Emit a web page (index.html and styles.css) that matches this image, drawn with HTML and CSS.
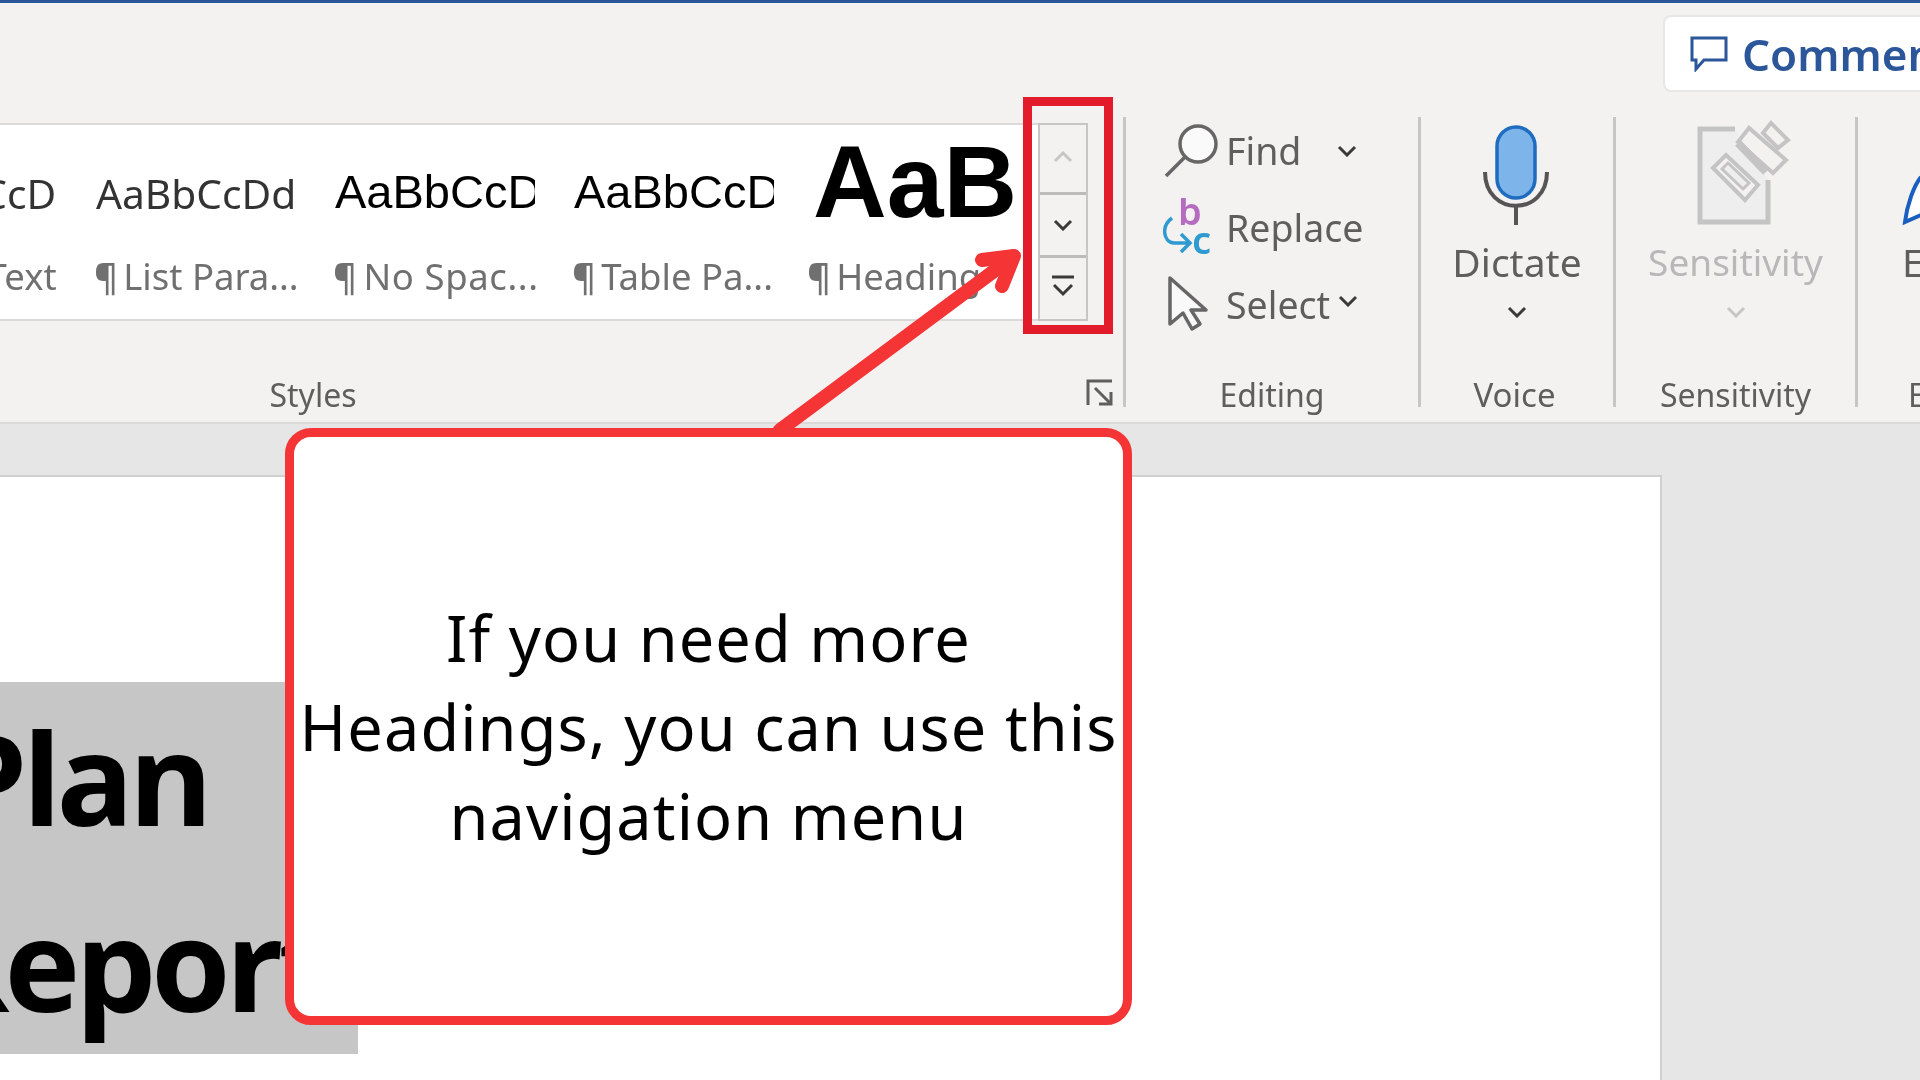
FILE: index.html
```html
<!DOCTYPE html>
<html lang="en">
<head>
  <meta charset="UTF-8" />
  <title>Styles gallery</title>
  <link rel="stylesheet" href="styles.css">
</head>
<body>
  <header class="ribbon">
    <div class="ribbon-top">
      <button class="comments">
        <svg class="comments-icon" viewBox="0 0 38 36"><path d="M2 2H36V24H14L6 33V24H2Z"/></svg>
        <span>Comments</span>
      </button>
    </div>
    <div class="groups">
      <section class="group group-styles">
        <div class="group-main gallery-wrap">
          <div class="gallery">
            <div class="style-item style-item-first">
              <div class="sample sample-light">AaBbCcD</div>
              <div class="style-name"><span class="pilcrow">¶</span> Body Text</div>
            </div>
            <div class="style-item">
              <div class="sample sample-light">AaBbCcDd</div>
              <div class="style-name"><span class="pilcrow">¶</span> List Para...</div>
            </div>
            <div class="style-item">
              <div class="sample">AaBbCcD</div>
              <div class="style-name style-name-wide"><span class="pilcrow">¶</span> No Spac...</div>
            </div>
            <div class="style-item">
              <div class="sample">AaBbCcD</div>
              <div class="style-name"><span class="pilcrow">¶</span> Table Pa...</div>
            </div>
            <div class="style-item">
              <div class="sample sample-big">AaB</div>
              <div class="style-name style-name-last"><span class="pilcrow">¶</span> Heading 1</div>
            </div>
          </div>
          <div class="scroller">
            <div class="scroll-btn scroll-up"><svg viewBox="0 0 20 12"><path d="M2 10L10 2L18 10"/></svg></div>
            <div class="scroll-btn scroll-down"><svg viewBox="0 0 20 12"><path d="M2 2L10 10L18 2"/></svg></div>
            <div class="scroll-btn scroll-more"><svg viewBox="0 0 24 22"><path d="M1 2H23"/><path d="M3 10L12 19L21 10"/></svg></div>
          </div>
        </div>
        <div class="group-label">Styles
          <svg class="launcher" viewBox="0 0 28 28"><path d="M26 2H2V26"/><path d="M9 9L25 25"/><path d="M25 13V25H13"/></svg>
        </div>
      </section>

      <section class="group group-editing">
        <div class="group-main edit-list">
          <div class="edit-row">
            <svg class="edit-icon" viewBox="0 0 56 56"><circle cx="35" cy="21" r="18"/><path d="M22 34L3 53"/></svg>
            <span>Find</span>
            <svg class="chev chev-find" viewBox="0 0 20 12"><path d="M2 2L10 10L18 2"/></svg>
          </div>
          <div class="edit-row">
            <svg class="edit-icon" viewBox="0 0 56 60">
              <text class="rep-b" x="15" y="27">b</text>
              <text class="rep-c" x="29" y="56">c</text>
              <path class="rep-arrow" d="M9 20C-2 28 0 44 11 45H27"/>
              <path class="rep-arrow" d="M18 36L27 45L18 54"/>
            </svg>
            <span>Replace</span>
          </div>
          <div class="edit-row">
            <svg class="edit-icon" viewBox="0 0 56 60"><path class="cursor" d="M7 3V49L20 38L29 54L37 49L28 35H43Z"/></svg>
            <span>Select</span>
            <svg class="chev chev-select" viewBox="0 0 20 12"><path d="M2 2L10 10L18 2"/></svg>
          </div>
        </div>
        <div class="group-label">Editing</div>
      </section>

      <section class="group group-voice">
        <div class="group-main big-btn">
          <svg class="big-icon" viewBox="0 0 70 100">
            <path class="mic-cradle" d="M3 47C3 92 65 92 65 47"/>
            <path class="mic-cradle" d="M34 80V100"/>
            <rect class="mic-body" x="15" y="2" width="38" height="71" rx="19"/>
          </svg>
          <div class="big-text">Dictate</div>
          <svg class="chev" viewBox="0 0 20 12"><path d="M2 2L10 10L18 2"/></svg>
        </div>
        <div class="group-label group-label-voice">Voice</div>
      </section>

      <section class="group group-sensitivity">
        <div class="group-main big-btn is-disabled">
          <svg class="big-icon" viewBox="0 0 90 100">
            <path class="sens-page" d="M44 4H9V97H77V55"/>
            <path class="sens-line" d="M22 43L35 30L67 60L54 75Z"/>
            <path class="sens-slot" d="M31 44L37 38L58 58L52 64Z"/>
            <path class="sens-line" d="M72 8L80 -2L97 15L87 23Z"/>
            <path class="sens-line" d="M58 3L47 17L82 48L95 35Z"/>
            <path class="sens-band" d="M47 18L75 47"/>
          </svg>
          <div class="big-text">Sensitivity</div>
          <svg class="chev" viewBox="0 0 20 12"><path d="M2 2L10 10L18 2"/></svg>
        </div>
        <div class="group-label">Sensitivity</div>
      </section>

      <section class="group group-last">
        <div class="group-main big-btn big-btn-left">
          <svg class="big-icon" viewBox="0 0 30 100"><path class="pen" d="M19 52C12 60 5 80 3 97L19 90"/></svg>
          <div class="big-text">Editor</div>
        </div>
        <div class="group-label group-label-left">Editor</div>
      </section>
    </div>
  </header>

  <main class="workspace">
    <div class="page">
      <div class="doc-title">
        <div class="doc-line doc-line-1">Plan</div>
        <div class="doc-line doc-line-2">Report</div>
      </div>
    </div>
  </main>

  <!-- annotation on top of the screenshot -->
  <div class="mark-box"></div>
  <svg class="mark-arrow" viewBox="0 0 270 200">
    <path d="M10 194L243 21"/>
    <path d="M212 24L244 20L232 50"/>
  </svg>
  <div class="callout">
    <p>If you need more<br>Headings, you can use this<br>navigation menu</p>
  </div>
</body>
</html>
```

FILE: styles.css
```css
* {
  box-sizing: border-box;
}
html, body {
  margin: 0;
  height: 1080px;
  overflow: hidden;
}
body {
  display: flex;
  flex-direction: column;
  width: 1920px;
  position: relative;
  font-family: "Noto Sans", sans-serif;
  background: #e6e6e6;
}

/* ribbon */
.ribbon {
  height: 424px;
  flex: none;
  background: #f3f2f1;
  border-top: 3px solid #2b579a;
  border-bottom: 2px solid #dcdad8;
  filter: blur(0.5px);
}
.ribbon-top {
  height: 114px;
  padding: 12px 0 0 1663px;
}
.comments {
  display: flex;
  align-items: center;
  width: 320px;
  height: 77px;
  padding: 0 0 0 25px;
  background: #fff;
  border: 2px solid #e9e7e5;
  border-radius: 8px;
  font: 600 44px "Noto Sans", sans-serif;
  color: #2b579a;
}
.comments-icon {
  width: 38px;
  height: 36px;
  margin-right: 14px;
  fill: none;
  stroke: #2b579a;
  stroke-width: 3;
}
.groups {
  display: flex;
  height: 290px;
}
.group {
  display: flex;
  flex-direction: column;
  flex: none;
  border-right: 3px solid #c8c6c4;
  position: relative;
}
.group-main {
  height: 258px;
}
.group-label {
  height: 40px;
  line-height: 40px;
  margin-bottom: -8px;
  text-align: center;
  font-size: 32px;
  color: #605e5c;
}
.group-label-voice {
  padding-right: 5px;
  font-size: 33px;
}
.group-styles {
  width: 1623px;
  margin-left: -497px;
}
.group-editing {
  width: 295px;
}
.group-voice {
  width: 195px;
}
.group-sensitivity {
  width: 242px;
}
.group-last {
  border-right: 0;
  width: 200px;
}

/* styles gallery */
.gallery-wrap {
  display: flex;
  align-items: flex-start;
  padding-top: 6px;
}
.gallery {
  display: flex;
  width: 1535px;
  height: 198px;
  padding-left: 354px;
  background: #fff;
  border-top: 2px solid #dcdad8;
  border-bottom: 2px solid #dcdad8;
}
.style-item {
  width: 239px;
  flex: none;
}
.sample {
  width: 200px;
  height: 112px;
  padding-top: 37px;
  overflow: hidden;
  white-space: nowrap;
  font: 47px/60px "Liberation Sans", sans-serif;
  color: #000;
}
.sample-light {
  padding-top: 38px;
  font: 40.7px/60px "Noto Sans", sans-serif;
  color: #333;
}
.style-item-first .sample {
  margin-left: 24px;
}
.sample-big {
  padding-top: 2px;
  font: bold 102px/110px "Liberation Sans", sans-serif;
  overflow: visible;
}
.style-name {
  margin: 14px 0 0 -2px;
  white-space: nowrap;
  font-size: 36.5px;
  line-height: 50px;
  color: #707070;
}
.style-item-first .style-name {
  margin-left: 4px;
}
.style-name-wide {
  letter-spacing: 0.6px;
}
.style-name-last {
  margin-left: -6px;
}
.pilcrow {
  margin-right: -4px;
  font-weight: 600;
}
.scroller {
  display: flex;
  flex-direction: column;
  width: 50px;
  height: 198px;
  border: 2px solid #c8c6c4;
  background: #f3f2f1;
}
.scroll-btn {
  display: flex;
  align-items: center;
  justify-content: center;
  border-top: 3px solid #bdbbb9;
}
.scroll-btn svg {
  width: 20px;
  height: 12px;
  fill: none;
  stroke: #3b3a39;
  stroke-width: 3;
}
.scroll-up {
  height: 67px;
  border-top: 0;
}
.scroll-up svg {
  margin-bottom: 4px;
  stroke: #c8c6c4;
}
.scroll-down {
  height: 63px;
}
.scroll-more {
  height: 64px;
  padding-bottom: 6px;
}
.scroll-more svg {
  width: 24px;
  height: 22px;
}
.launcher {
  position: absolute;
  right: 9px;
  bottom: 0;
  width: 28px;
  height: 28px;
  fill: none;
  stroke: #605e5c;
  stroke-width: 3;
}

/* editing */
.edit-list {
  height: 263px;
  margin-top: -5px;
  padding-left: 37px;
}
.edit-row {
  display: flex;
  align-items: center;
  height: 77px;
  font-size: 37.5px;
  color: #605e5c;
}
.edit-icon {
  width: 56px;
  height: 60px;
  flex: none;
  margin-right: 7px;
  fill: none;
  stroke: #666;
  stroke-width: 3.5;
}
.edit-icon circle {
  fill: #fafafa;
}
.rep-b {
  font: 600 38px "Noto Sans", sans-serif;
  fill: #b56cc0;
  stroke: none;
}
.rep-c {
  font: 600 38px "Noto Sans", sans-serif;
  fill: #2e9ad0;
  stroke: none;
}
.rep-arrow {
  stroke: #2e9ad0;
}
.cursor {
  fill: #f9f9f9;
  stroke-linejoin: round;
}
.chev {
  width: 20px;
  height: 12px;
  fill: none;
  stroke: #3b3a39;
  stroke-width: 3;
}
.chev-find {
  margin-left: 36px;
}
.chev-select {
  margin: -8px 0 0 8px;
}

/* big buttons */
.big-btn {
  display: flex;
  flex-direction: column;
  align-items: center;
  padding-top: 8px;
}
.big-icon {
  height: 100px;
  width: 90px;
  flex: none;
  overflow: visible;
}
.big-text {
  margin: 12px 0 19px;
  font-size: 39px;
  line-height: 50px;
  color: #605e5c;
}
.mic-body {
  fill: #7db5ea;
  stroke: #1f6cbf;
  stroke-width: 3.5;
}
.mic-cradle {
  fill: none;
  stroke: #555;
  stroke-width: 4;
}
.is-disabled .big-text {
  color: #b8b8b8;
  font-size: 37px;
}
.is-disabled .chev {
  stroke: #c8c6c4;
}
.sens-page {
  fill: #eeeeee;
  stroke: #c4c4c4;
  stroke-width: 5;
}
.sens-line {
  fill: #f3f2f1;
  stroke: #c4c4c4;
  stroke-width: 4;
}
.sens-slot {
  fill: #eeeeee;
  stroke: #c4c4c4;
  stroke-width: 3;
}
.sens-band {
  fill: none;
  stroke: #c4c4c4;
  stroke-width: 8;
}
.big-btn-left {
  align-items: flex-start;
  padding-left: 44px;
}
.big-btn-left .big-icon {
  width: 30px;
}
.pen {
  fill: #fff;
  stroke: #1a5fc0;
  stroke-width: 4;
}
.group-label-left {
  padding-left: 50px;
  text-align: left;
}

/* document */
.workspace {
  flex: 1;
  padding-top: 51px;
  filter: blur(0.6px);
}
.page {
  width: 1662px;
  height: 620px;
  background: #fff;
  border-top: 2px solid #d0d0d0;
  border-right: 2px solid #d0d0d0;
  padding-top: 205px;
}
.doc-title {
  width: 358px;
  height: 372px;
  background: #c6c6c6;
  font: bold 128px/186px "Open Sans", sans-serif;
  letter-spacing: -5px;
  color: #000;
  white-space: nowrap;
}
.doc-line {
  position: relative;
  top: 2px;
}
.doc-line-1 {
  margin-left: -53px;
}
.doc-line-2 {
  margin-left: -75px;
}

/* annotation */
.mark-box {
  position: absolute;
  left: 1023px;
  top: 97px;
  width: 90px;
  height: 237px;
  border: 9px solid #e21c2a;
}
.mark-arrow {
  position: absolute;
  left: 770px;
  top: 236px;
  width: 270px;
  height: 200px;
  fill: none;
  stroke: #f53535;
  stroke-width: 14;
  stroke-linecap: round;
  stroke-linejoin: round;
}
.callout {
  position: absolute;
  left: 285px;
  top: 428px;
  width: 847px;
  height: 597px;
  display: flex;
  align-items: center;
  justify-content: center;
  background: #fff;
  border: 9px solid #f53535;
  border-radius: 26px;
}
.callout p {
  margin: 0;
  font-size: 63px;
  letter-spacing: 1.1px;
  line-height: 89px;
  text-align: center;
  color: #000;
  white-space: nowrap;
}
```
